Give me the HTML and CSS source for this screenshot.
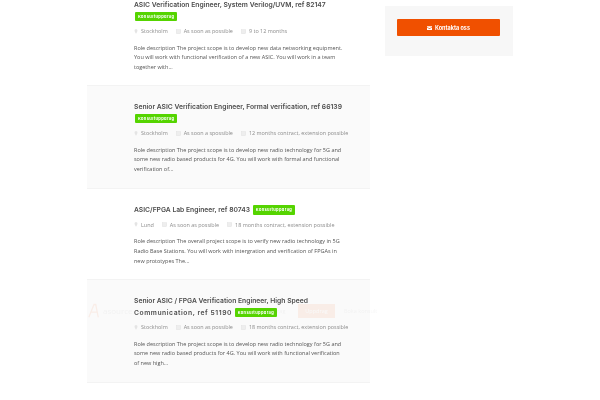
FILE: index.html
```html
<!DOCTYPE html>
<html lang="sv">

<head>
    <meta charset="utf-8">
    <meta name="viewport" content="width=device-width, initial-scale=1.0">
    <title>Uppdrag</title>
    <link rel="stylesheet" href="styles.css">
</head>

<body>
    <div class="page">
        <main class="jobs">
            <article class="job">
                <h2 class="job_title">ASIC Verification Engineer, System Verilog/UVM, ref 82147 <span class="badge">Konsultuppdrag</span></h2>
                <div class="meta">
                    <span class="meta_item"><svg class="icon" viewBox="0 0 6 8"><path d="M3 0a2.4 2.4 0 0 0-2.4 2.4C.6 4.2 3 7.6 3 7.6s2.4-3.4 2.4-5.200A2.400 2.400 0 0 0 3 0z"/></svg>Stockholm</span>
                    <span class="meta_item"><svg class="icon icon_cal" viewBox="0 0 8 8"><rect x=".5" y="1" width="7" height="6.500"/></svg>As soon as possible</span>
                    <span class="meta_item"><svg class="icon icon_cal" viewBox="0 0 8 8"><rect x=".5" y="1" width="7" height="6.500"/></svg>9 to 12 months</span>
                </div>
                <p class="desc">Role description The project scope is to develop new data networking equipment. You will work with functional verification of a new ASIC. You will work in a team together with...</p>
            </article>

            <article class="job job_alt">
                <h2 class="job_title">Senior ASIC Verification Engineer, Formal verification, ref 66139 <span class="badge">Konsultuppdrag</span></h2>
                <div class="meta">
                    <span class="meta_item"><svg class="icon" viewBox="0 0 6 8"><path d="M3 0a2.4 2.4 0 0 0-2.4 2.4C.6 4.2 3 7.6 3 7.6s2.4-3.4 2.4-5.200A2.400 2.400 0 0 0 3 0z"/></svg>Stockholm</span>
                    <span class="meta_item"><svg class="icon icon_cal" viewBox="0 0 8 8"><rect x=".5" y="1" width="7" height="6.500"/></svg>As soon a spossible</span>
                    <span class="meta_item"><svg class="icon icon_cal" viewBox="0 0 8 8"><rect x=".5" y="1" width="7" height="6.500"/></svg>12 months contract, extension possible</span>
                </div>
                <p class="desc">Role description The project scope is to develop new radio technology for 5G and some new radio based products for 4G. You will work with formal and functional verification of...</p>
            </article>

            <article class="job job_short">
                <h2 class="job_title">ASIC/FPGA Lab Engineer, ref 80743 <span class="badge">Konsultuppdrag</span></h2>
                <div class="meta">
                    <span class="meta_item"><svg class="icon" viewBox="0 0 6 8"><path d="M3 0a2.4 2.4 0 0 0-2.4 2.4C.6 4.2 3 7.6 3 7.6s2.4-3.4 2.4-5.200A2.400 2.400 0 0 0 3 0z"/></svg>Lund</span>
                    <span class="meta_item"><svg class="icon icon_cal" viewBox="0 0 8 8"><rect x=".5" y="1" width="7" height="6.500"/></svg>As soon as possible</span>
                    <span class="meta_item"><svg class="icon icon_cal" viewBox="0 0 8 8"><rect x=".5" y="1" width="7" height="6.500"/></svg>18 months contract, extension possible</span>
                </div>
                <p class="desc">Role description The overall project scope is to verify new radio technology in 5G Radio Base Stations. You will work with intergration and verification of FPGAs in new prototypes The...</p>
            </article>

            <article class="job job_alt">
                <h2 class="job_title">Senior ASIC / FPGA Verification Engineer, High Speed <span class="title_wide">Communication, ref 51190</span> <span class="badge">Konsultuppdrag</span></h2>
                <div class="meta">
                    <span class="meta_item"><svg class="icon" viewBox="0 0 6 8"><path d="M3 0a2.4 2.4 0 0 0-2.4 2.4C.6 4.2 3 7.6 3 7.6s2.4-3.4 2.4-5.200A2.400 2.400 0 0 0 3 0z"/></svg>Stockholm</span>
                    <span class="meta_item"><svg class="icon icon_cal" viewBox="0 0 8 8"><rect x=".5" y="1" width="7" height="6.500"/></svg>As soon as possible</span>
                    <span class="meta_item"><svg class="icon icon_cal" viewBox="0 0 8 8"><rect x=".5" y="1" width="7" height="6.500"/></svg>18 months contract, extension possible</span>
                </div>
                <p class="desc">Role description The project scope is to develop new radio technology for 5G and some new radio based products for 4G. You will work with functional verification of new high...</p>
            </article>

            <article class="job">
                <h2 class="job_title">Senior ASIC Verification Engineer, Formal verification</h2>
            </article>
        </main>

        <aside class="side">
            <a class="contact" href="#"><svg class="mail" viewBox="0 0 8 6"><path d="M0 0h8v1.200L4 3.400 0 1.200zM0 2.200l4 2.200 4-2.200V6H0z"/></svg>Kontakta oss</a>
        </aside>
    </div>

    <!-- fixed header fading in over the list -->
    <div class="ghost_header">
        <svg class="ghost_logo" viewBox="0 0 14 16"><path d="M1 16 7 1h2l3 15M4 10h7" /></svg>
        <span class="ghost_name">asource</span>
        <span class="ghost_link">Uppdrag</span>
        <span class="ghost_btn">Uppdrag</span>
        <span class="ghost_link ghost_last">Boka konsult</span>
    </div>
</body>

</html>
```

FILE: styles.css
```css
html,
body {
    margin: 0;
    height: 400px;
    overflow: hidden;
    background-color: white;
}

body {
    font-family: "Open Sans", sans-serif;
    position: relative;
    filter: blur(0.45px);
}

.page {
    display: flex;
    align-items: flex-start;
    gap: 15px;
    margin-top: -16px;
    padding-left: 87px;
}

.jobs {
    width: 283px;
    flex: none;
}

.job {
    padding: 15px 25px 0 47px;
    height: 103px;
    box-sizing: border-box;
    border-bottom: 1px solid #f3f3f3;
}

.job:first-child {
    height: 102px;
}

.job_short {
    height: 91px;
}

.job_alt {
    background-color: #fafafa;
}

.job_title {
    margin: 0;
    font-family: "Inter", sans-serif;
    font-size: 6.750px;
    font-weight: 600;
    line-height: 11.500px;
    color: #4d4d4d;
}

.title_wide {
    letter-spacing: 0.55px;
}

.badge {
    display: inline-block;
    vertical-align: middle;
    margin-left: 1px;
    padding: 0 3px;
    height: 9.500px;
    line-height: 9.500px;
    background-color: #55d400;
    border-radius: 1px;
    font-size: 4px;
    font-weight: 700;
    letter-spacing: 0.35px;
    color: white;
}

.meta {
    display: flex;
    gap: 8px;
    margin-top: 4px;
    font-size: 5.450px;
    line-height: 10px;
    color: #8c8c8c;
    white-space: nowrap;
}

.meta_item {
    display: flex;
    align-items: center;
    gap: 3px;
}

.icon {
    width: 4px;
    height: 5px;
    fill: #e4e4e4;
}

.icon_cal {
    width: 5px;
    fill: #eee;
    stroke: #ddd;
    stroke-width: 0.6;
}

.desc {
    margin: 7.500px 0 0;
    font-size: 5.500px;
    line-height: 9.950px;
    color: #555;
}

.side {
    flex: none;
    margin-top: 22px;
    width: 128px;
    padding: 13px 13px 20px 12px;
    box-sizing: border-box;
    background-color: #f7f7f7;
}

.contact {
    display: flex;
    justify-content: center;
    align-items: center;
    gap: 3px;
    height: 17px;
    background-color: #f05000;
    border-radius: 1px;
    font-family: "Inter", sans-serif;
    font-size: 5.500px;
    font-weight: 700;
    color: white;
    text-decoration: none;
}

.mail {
    width: 5px;
    height: 4px;
    fill: white;
}

.ghost_header {
    position: absolute;
    top: 303px;
    left: 88px;
    display: flex;
    align-items: center;
    opacity: 0.07;
    font-size: 5.500px;
    color: #888;
}

.ghost_logo {
    width: 12px;
    height: 15px;
    fill: none;
    stroke: #f05000;
    stroke-width: 1.500;
}

.ghost_name {
    margin-left: 3px;
    width: 160px;
    font-size: 8px;
}

.ghost_link {
    width: 35px;
}

.ghost_btn {
    width: 37px;
    height: 14px;
    line-height: 14px;
    text-align: center;
    background-color: #f05000;
    color: white;
}

.ghost_last {
    margin-left: 9px;
    width: 56px;
}
```
